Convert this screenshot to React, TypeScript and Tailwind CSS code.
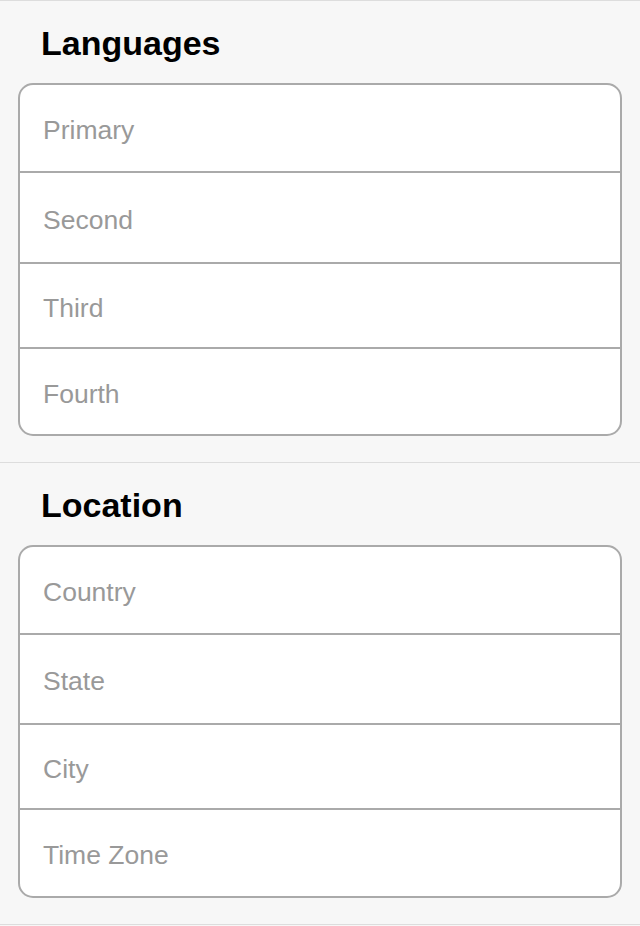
import React from "react";

type Section = { title: string; rows: { label: string; h: string }[] };

const sections: Section[] = [
  {
    title: "Languages",
    rows: [
      { label: "Primary", h: "h-[86px]" },
      { label: "Second", h: "h-[91px]" },
      { label: "Third", h: "h-[85px]" },
      { label: "Fourth", h: "h-[87px]" },
    ],
  },
  {
    title: "Location",
    rows: [
      { label: "Country", h: "h-[86px]" },
      { label: "State", h: "h-[90px]" },
      { label: "City", h: "h-[85px]" },
      { label: "Time Zone", h: "h-[88px]" },
    ],
  },
];

export default function App() {
  return (
    <div
      className="w-[640px] min-h-[926px] bg-[#f7f7f7] border-t border-[#dddddd]"
      style={{ fontFamily: '"Liberation Sans", Arial, Helvetica, sans-serif' }}
    >
      {sections.map((s) => (
        <section key={s.title} className="pt-[23px] pb-[26px] border-b border-[#dddddd]">
          <h2 className="px-[41px] h-[37px] leading-[38px] text-[34px] font-bold text-black">
            {s.title}
          </h2>
          <div className="mt-[22px] mx-[18px] rounded-[15px] border-2 border-[#aaaaaa] bg-white overflow-hidden">
            {s.rows.map((r, i) => (
              <div
                key={r.label}
                className={`${r.h} flex items-center pl-[23px] pt-[6px] text-[26.5px] text-[#999999] ${
                  i > 0 ? "border-t-2 border-[#aaaaaa]" : ""
                }`}
              >
                {r.label}
              </div>
            ))}
          </div>
        </section>
      ))}
    </div>
  );
}
